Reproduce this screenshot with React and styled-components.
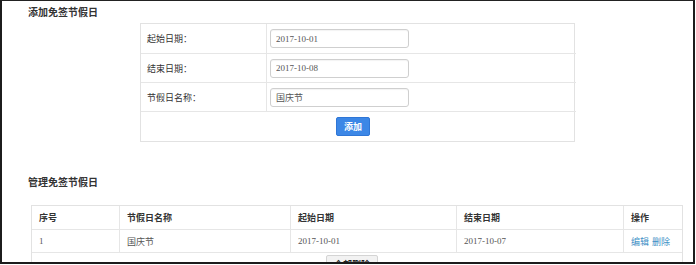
import React from 'react'
import styled, { createGlobalStyle } from 'styled-components'

const GlobalStyle = createGlobalStyle`
  html, body {
    margin: 0;
    padding: 0;
    background: #ffffff;
  }
  body {
    font-family: "Noto Sans CJK SC", "Liberation Sans", sans-serif;
    font-size: 9px;
    color: #444;
  }
`

const Frame = styled.div`
  box-sizing: border-box;
  width: 695px;
  height: 264px;
  border-top: 1px solid #222;
  border-left: 2px solid #1c1c1c;
  border-right: 2px solid #1c1c1c;
  border-bottom: 2px solid #1c1c1c;
  padding: 2px 0 0 26px;
  overflow: hidden;
  background: #fff;
`

const SectionTitle = styled.h3`
  margin: 0;
  height: 18px;
  line-height: 18px;
  font-size: 10px;
  font-weight: bold;
  color: #333;
  margin-top: ${(p) => p.$top || 0}px;
`

const FormGrid = styled.div`
  display: grid;
  grid-template-columns: 125px 310px;
  width: 435px;
  margin: 2px 0 0 112px;
  border: 1px solid #e2e2e2;
  box-sizing: border-box;
`

const FormCell = styled.div`
  box-sizing: border-box;
  height: 29px;
  display: flex;
  align-items: center;
  border-top: ${(p) => (p.$first ? 'none' : '1px solid #e6e6e6')};
  border-left: ${(p) => (p.$right ? '1px solid #e6e6e6' : 'none')};
  padding-left: ${(p) => (p.$right ? 3 : 6)}px;
  color: #333;
`

const ActionCell = styled.div`
  grid-column: 1 / span 2;
  height: 29px;
  border-top: 1px solid #e6e6e6;
  display: flex;
  align-items: center;
  padding-left: 195px;
`

const DateInput = styled.input`
  box-sizing: border-box;
  width: 139px;
  height: 19px;
  border: 1px solid #cfcfcf;
  border-radius: 3px;
  padding: 0 5px;
  font-family: ${(p) =>
    p.$cjk
      ? '"Noto Sans CJK SC", sans-serif'
      : '"Liberation Serif", "Noto Sans CJK SC", serif'};
  font-size: 9px;
  color: #555;
  outline: none;
  box-shadow: inset 0 1px 1px rgba(0, 0, 0, 0.05);
`

const PrimaryButton = styled.button`
  width: 34px;
  height: 19px;
  border: 1px solid #2f76d6;
  border-radius: 2px;
  background: #3c87e6;
  color: #fff;
  font-family: "Noto Sans CJK SC", sans-serif;
  font-size: 9px;
  font-weight: bold;
  padding: 0;
`

const Table = styled.div`
  width: 652px;
  margin: 14px 0 0 3px;
  border: 1px solid #e2e2e2;
  box-sizing: border-box;
`

const Row = styled.div`
  display: grid;
  grid-template-columns: 87px 171px 166px 167px 1fr;
  height: 23px;
  border-top: ${(p) => (p.$first ? 'none' : '1px solid #e6e6e6')};
  box-sizing: border-box;
`

const Cell = styled.div`
  display: flex;
  align-items: center;
  padding-left: 7px;
  border-left: ${(p) => (p.$first ? 'none' : '1px solid #e6e6e6')};
  font-weight: ${(p) => (p.$head ? 'bold' : 'normal')};
  color: ${(p) => (p.$head ? '#333' : '#555')};
  font-family: ${(p) =>
    p.$num
      ? '"Liberation Serif", "Noto Sans CJK SC", serif'
      : '"Noto Sans CJK SC", sans-serif'};
`

const Link = styled.a`
  color: #3d8fc6;
  margin-right: 3px;
  text-decoration: none;
`

const FooterRow = styled.div`
  border-top: 1px solid #e6e6e6;
  height: 20px;
  display: flex;
  padding: 2px 0 0 294px;
  box-sizing: border-box;
`

const GreyButton = styled.button`
  height: 18px;
  width: 52px;
  border: 1px solid #d4d4d4;
  background: #f2f2f2;
  border-radius: 2px;
  font-family: "Noto Sans CJK SC", sans-serif;
  font-size: 9px;
  font-weight: bold;
  color: #222;
  padding: 0;
`

const fields = [
  { label: '起始日期：', value: '2017-10-01' },
  { label: '结束日期：', value: '2017-10-08' },
  { label: '节假日名称：', value: '国庆节', cjk: true },
]

const heads = ['序号', '节假日名称', '起始日期', '结束日期', '操作']

export default function App() {
  return (
    <Frame>
      <GlobalStyle />
      <SectionTitle>添加免签节假日</SectionTitle>
      <FormGrid>
        {fields.map((f, i) => (
          <React.Fragment key={f.label}>
            <FormCell $first={i === 0}>{f.label}</FormCell>
            <FormCell $first={i === 0} $right>
              <DateInput $cjk={f.cjk} defaultValue={f.value} />
            </FormCell>
          </React.Fragment>
        ))}
        <ActionCell>
          <PrimaryButton>添加</PrimaryButton>
        </ActionCell>
      </FormGrid>

      <SectionTitle $top={31}>管理免签节假日</SectionTitle>
      <Table>
        <Row $first>
          {heads.map((h, i) => (
            <Cell key={h} $first={i === 0} $head>
              {h}
            </Cell>
          ))}
        </Row>
        <Row>
          <Cell $first $num>1</Cell>
          <Cell>国庆节</Cell>
          <Cell $num>2017-10-01</Cell>
          <Cell $num>2017-10-07</Cell>
          <Cell>
            <Link>编辑</Link>
            <Link>删除</Link>
          </Cell>
        </Row>
        <FooterRow>
          <GreyButton>全部删除</GreyButton>
        </FooterRow>
      </Table>
    </Frame>
  )
}
